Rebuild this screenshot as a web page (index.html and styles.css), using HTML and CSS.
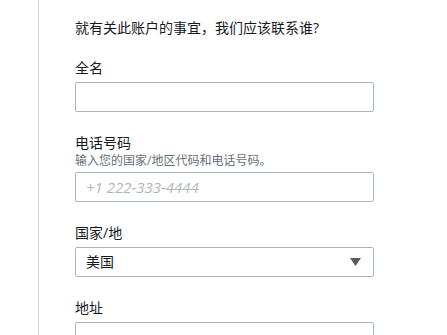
FILE: index.html
```html
<!DOCTYPE html>
<html lang="zh-CN">
<head>
<meta charset="utf-8">
<title>联系人信息</title>
<link rel="stylesheet" href="styles.css">
</head>
<body>
<div class="page">
  <form class="form">
    <p class="intro">就有关此账户的事宜，我们应该联系谁?</p>

    <div class="field">
      <label class="label" for="fullname">全名</label>
      <input class="input" id="fullname" type="text">
    </div>

    <div class="field">
      <label class="label" for="phone">电话号码</label>
      <div class="hint">输入您的国家/地区代码和电话号码。</div>
      <input class="input" id="phone" type="text" placeholder="+1 222-333-4444">
    </div>

    <div class="field">
      <label class="label" for="country">国家/地</label>
      <div class="select" id="country">
        <span class="select-value">美国</span>
        <svg class="caret" width="11" height="8" viewBox="0 0 11 8" aria-hidden="true"><path d="M0 0H11L5.5 8Z" fill="#545b64"/></svg>
      </div>
    </div>

    <div class="field">
      <label class="label" for="address">地址</label>
      <input class="input" id="address" type="text">
    </div>
  </form>
</div>
</body>
</html>
```

FILE: styles.css
```css
html, body {
  margin: 0;
  padding: 0;
  background: #ffffff;
}

body {
  font-family: "Open Sans", "Noto Sans CJK SC", sans-serif;
  color: #16191f;
  font-size: 14px;
  line-height: 20px;
  padding-left: 38px;
  height: 335px;
  overflow: hidden;
}

.page {
  border-left: 1px solid #d5dbdb;
  height: 335px;
  overflow: hidden;
  padding-left: 36px;
  box-sizing: border-box;
}

.form {
  width: 299px;
  padding-top: 18px;
}

.intro {
  margin: 0 0 20px 0;
  font-size: 14px;
  line-height: 20px;
}

.field {
  display: flex;
  flex-direction: column;
  margin-bottom: 21px;
}

.label {
  font-size: 14px;
  line-height: 20px;
  margin-bottom: 4px;
}

.hint {
  font-size: 12px;
  line-height: 16px;
  color: #687078;
  margin-top: -4px;
  margin-bottom: 3px;
}

.input,
.select {
  box-sizing: border-box;
  width: 299px;
  height: 30px;
  border: 1px solid #aab7b8;
  border-radius: 2px;
  background: #ffffff;
  padding: 0 10px;
  font-family: "Open Sans", "Noto Sans CJK SC", sans-serif;
  font-size: 15px;
  color: #16191f;
  outline: none;
}

.input::placeholder {
  color: #aab7b8;
  font-style: italic;
}

.select {
  display: flex;
  align-items: center;
  justify-content: space-between;
  padding-right: 12px;
  font-size: 14px;
}

.select-value {
  line-height: 20px;
}

.caret {
  display: block;
}
```
